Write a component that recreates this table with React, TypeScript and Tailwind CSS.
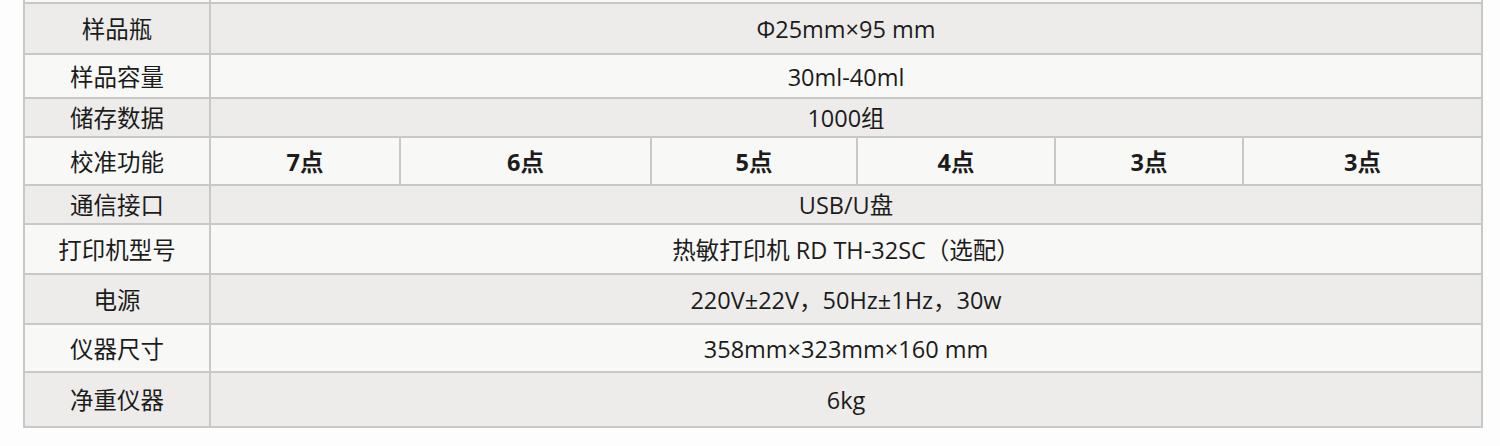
const ROWS = [
  { label: "样品瓶", value: "Φ25mm×95 mm", h: "h-[51px]", bg: "bg-[#edecea]" },
  { label: "样品容量", value: "30ml-40ml", h: "h-[44px]", bg: "bg-[#f8f8f6]" },
  { label: "储存数据", value: "1000组", h: "h-[39px]", bg: "bg-[#edecea]" },
  { label: "校准功能", value: null, h: "h-[48px]", bg: "bg-[#f8f8f6]" },
  { label: "通信接口", value: "USB/U盘", h: "h-[39px]", bg: "bg-[#edecea]" },
  { label: "打印机型号", value: "热敏打印机 RD TH-32SC（选配）", h: "h-[50px]", bg: "bg-[#f8f8f6]" },
  { label: "电源", value: "220V±22V，50Hz±1Hz，30w", h: "h-[50px]", bg: "bg-[#edecea]" },
  { label: "仪器尺寸", value: "358mm×323mm×160 mm", h: "h-[48px]", bg: "bg-[#f8f8f6]" },
  { label: "净重仪器", value: "6kg", h: "h-[53px]", bg: "bg-[#edecea]" },
];

const POINTS = [
  { text: "7点", w: "w-[190px]" },
  { text: "6点", w: "w-[251px]" },
  { text: "5点", w: "w-[206px]" },
  { text: "4点", w: "w-[198px]" },
  { text: "3点", w: "w-[188px]" },
  { text: "3点", w: "flex-1" },
];

export default function App() {
  return (
    <div className="w-[1500px] h-[446px] bg-[#fdfdfd] overflow-hidden font-['Open_Sans','Noto_Sans_CJK_SC',sans-serif] text-[23.5px] text-[#1c1c1c]">
      <div className="ml-[23px] w-[1460px] border-x-2 border-[#c8c8c6]">
        {/* tail of the previous row */}
        <div className="flex h-[2px] bg-[#f8f8f6]">
          <div className="w-[186px] border-r-2 border-[#c8c8c6]" />
        </div>
        {ROWS.map((row, i) => (
          <div
            key={row.label}
            className={`flex ${row.h} ${row.bg} border-t-2 border-[#c8c8c6] ${i === ROWS.length - 1 ? "border-b-2 box-content" : ""}`}
          >
            <div className="w-[186px] shrink-0 border-r-2 border-[#c8c8c6] flex items-center justify-center pt-[3px]">
              {row.label}
            </div>
            {row.value ? (
              <div className="flex-1 flex items-center justify-center pt-[3px]">{row.value}</div>
            ) : (
              <div className="flex-1 flex">
                {POINTS.map((p, j) => (
                  <div
                    key={j}
                    className={`${p.w} shrink-0 flex items-center justify-center pt-[3px] font-bold ${j < POINTS.length - 1 ? "border-r-2 border-[#c8c8c6]" : ""}`}
                  >
                    {p.text}
                  </div>
                ))}
              </div>
            )}
          </div>
        ))}
      </div>
    </div>
  );
}
